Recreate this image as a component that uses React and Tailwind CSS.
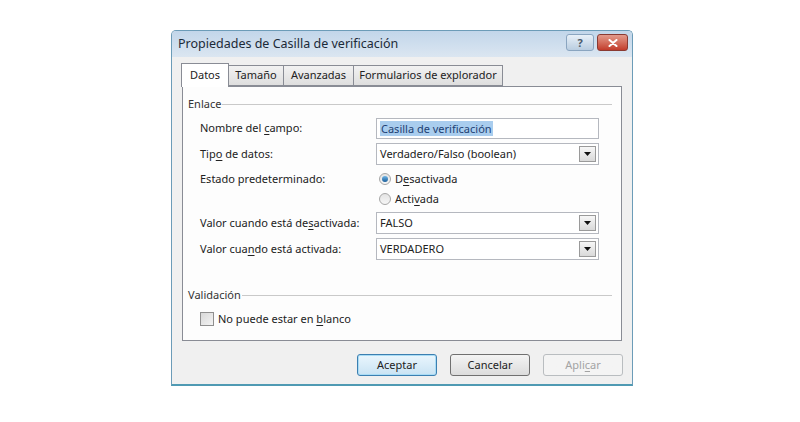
import React from 'react';

const font = { fontFamily: '"Noto Sans", "Open Sans", sans-serif' };

const U = ({ children }) => <span className="underline underline-offset-2">{children}</span>;

const DropButton = () => (
  <div className="w-[17px] h-[16px] border border-[#9a9a9a] bg-gradient-to-b from-[#f7f7f7] to-[#d9d9d9] flex items-center justify-center">
    <svg width="7" height="4" viewBox="0 0 7 4">
      <path d="M0 0 H7 L3.5 4 Z" fill="#111" />
    </svg>
  </div>
);

const Select = ({ value }) => (
  <div className="w-[223px] h-[22px] border border-[#b5b8bf] bg-white flex items-center justify-between pl-[3px] pr-[2px]">
    <span className="text-[11px] text-[#222]">{value}</span>
    <DropButton />
  </div>
);

const Row = ({ label, children, className = '' }) => (
  <div className={`flex items-center ${className}`}>
    <div className="w-[193px] shrink-0 pl-[17px] text-[11px] text-[#222] whitespace-nowrap">{label}</div>
    {children}
  </div>
);

const GroupHeader = ({ title, className = '' }) => (
  <div className={`flex items-center h-[14px] pl-[5px] pr-[9px] ${className}`}>
    <span className="text-[11px] text-[#333] pr-[1px]">{title}</span>
    <div className="flex-1 h-px bg-[#c9c9c9]" />
  </div>
);

const Radio = ({ checked, children }) => (
  <div className="flex items-center gap-[4px] h-[20px]">
    <div className="w-[12px] h-[12px] rounded-full border border-[#a7a7a7] bg-gradient-to-b from-[#e4e4e4] to-[#f6f6f6] flex items-center justify-center">
      {checked && <div className="w-[6px] h-[6px] rounded-full bg-gradient-to-b from-[#6cb4e6] to-[#1c5f9a]" />}
    </div>
    <span className="text-[11px] text-[#222]">{children}</span>
  </div>
);

const Btn = ({ children, variant }) => {
  const styles = {
    default: 'border-[#3c7fb1] from-[#eaf6fd] to-[#c9e3f3] text-[#222] shadow-[inset_0_0_0_1px_#a9dcf5]',
    normal: 'border-[#707070] from-[#f4f4f4] to-[#dcdcdc] text-[#222]',
    disabled: 'border-[#b9bdc0] from-[#f4f4f4] to-[#f4f4f4] text-[#a3a3a3]',
  };
  return (
    <div className={`w-[80px] h-[22px] rounded-[3px] border bg-gradient-to-b flex items-center justify-center text-[11px] ${styles[variant]}`}>
      {children}
    </div>
  );
};

export default function App() {
  return (
    <div className="w-[800px] h-[422px] bg-white pl-[171px] pt-[30px]" style={font}>
      <div className="w-[462px] h-[356px] border border-[#6c9cb8] border-b-2 border-b-[#4f9ab3] rounded-t-[5px] bg-[#f0f0f0] flex flex-col overflow-hidden">
        {/* title bar */}
        <div className="h-[26px] bg-gradient-to-b from-[#c2d6ea] to-[#dbe6f1] flex items-start justify-between pl-[6px] pr-[4px]">
          <span className="text-[12.5px] text-[#1c2a38] mt-[4px]">Propiedades de Casilla de verificación</span>
          <div className="flex gap-[3px] mt-[3px]">
            <div className="w-[28px] h-[17px] rounded-[3px] border border-[#8aa5c0] bg-gradient-to-b from-[#e8f0f8] to-[#b9cde0] flex items-center justify-center text-[11px] font-bold text-[#4a5a6a] leading-none">
              ?
            </div>
            <div className="w-[31px] h-[17px] rounded-[3px] border border-[#8a3a32] bg-gradient-to-b from-[#e29a8c] to-[#c23a2a] flex items-center justify-center">
              <svg width="10" height="8" viewBox="0 0 10 8">
                <path d="M1.5 1 L8.5 7 M8.5 1 L1.5 7" stroke="#fff" strokeWidth="2" strokeLinecap="round" />
              </svg>
            </div>
          </div>
        </div>

        {/* client */}
        <div className="flex-1 flex flex-col pt-[6px] pl-[10px] pr-[10px]">
          {/* tabs */}
          <div className="flex items-end h-[23px] text-[11px] text-[#222] -ml-[1px] relative z-10">
            <div className="h-[24px] w-[48px] border border-[#898c95] border-b-0 bg-white flex items-center justify-center pb-[1px] -mb-[1px]">
              Datos
            </div>
            <div className="h-[21px] w-[55px] border border-[#898c95] border-l-0 bg-gradient-to-b from-[#f2f2f2] to-[#dedede] flex items-center justify-center">
              Tamaño
            </div>
            <div className="h-[21px] w-[70px] border border-[#898c95] border-l-0 bg-gradient-to-b from-[#f2f2f2] to-[#dedede] flex items-center justify-center">
              Avanzadas
            </div>
            <div className="h-[21px] w-[149px] border border-[#898c95] border-l-0 bg-gradient-to-b from-[#f2f2f2] to-[#dedede] flex items-center justify-center">
              Formularios de explorador
            </div>
          </div>

          {/* panel */}
          <div className="h-[255px] border border-[#898c95] bg-[#fdfdfd] flex flex-col">
            <GroupHeader title="Enlace" className="mt-[10px]" />

            <Row label={<>Nombre del <U>c</U>ampo:</>} className="mt-[7px]">
              <div className="w-[223px] h-[21px] border border-[#b5b8bf] bg-white flex items-center pl-[3px]">
                <span className="text-[11px] bg-[#a9cdee] text-[#1d3f73] px-[1px] leading-[15px]">Casilla de verificación</span>
              </div>
            </Row>

            <Row label={<>Tip<U>o</U> de datos:</>} className="mt-[4px]">
              <Select value="Verdadero/Falso (boolean)" />
            </Row>

            <Row label="Estado predeterminado:" className="mt-[4px]">
              <div className="pl-[3px]">
                <Radio checked>D<U>e</U>sactivada</Radio>
              </div>
            </Row>
            <Row label="">
              <div className="pl-[3px]">
                <Radio>Acti<U>v</U>ada</Radio>
              </div>
            </Row>

            <Row label={<>Valor cuando está de<U>s</U>activada:</>} className="mt-[3px]">
              <Select value="FALSO" />
            </Row>

            <Row label={<>Valor cua<U>n</U>do está activada:</>} className="mt-[4px]">
              <Select value="VERDADERO" />
            </Row>

            <GroupHeader title="Validación" className="mt-[28px]" />

            <div className="flex items-center gap-[4px] pl-[17px] mt-[9px] h-[16px]">
              <div className="w-[14px] h-[14px] border border-[#8f8f8f] bg-gradient-to-br from-[#d8d8d8] to-[#f4f4f4]" />
              <span className="text-[11px] text-[#222]">No puede estar en <U>b</U>lanco</span>
            </div>
          </div>

          {/* buttons */}
          <div className="flex justify-end gap-[13px] mt-[13px] -mr-[1px]">
            <Btn variant="default">Aceptar</Btn>
            <Btn variant="normal">Cancelar</Btn>
            <Btn variant="disabled">Apli<U>c</U>ar</Btn>
          </div>
        </div>
      </div>
    </div>
  );
}
